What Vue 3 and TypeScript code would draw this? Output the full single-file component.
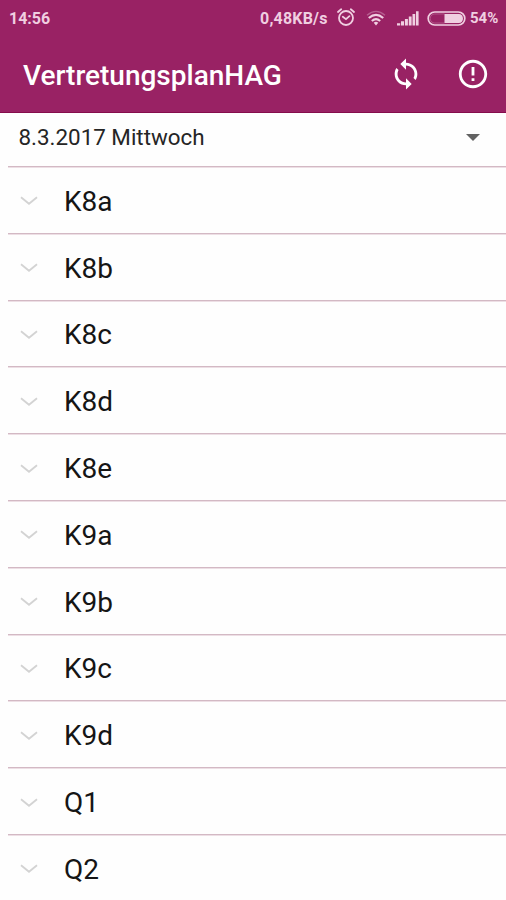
<script setup lang="ts">
const classes: string[] = ['K8a', 'K8b', 'K8c', 'K8d', 'K8e', 'K9a', 'K9b', 'K9c', 'K9d', 'Q1', 'Q2']
</script>

<template>
  <div class="screen">
    <header class="top">
      <div class="status">
        <span class="time">14:56</span>
        <span class="speed">0,48KB/s</span>
        <svg class="alarm" viewBox="0 0 18 18" width="18" height="18">
          <g fill="none" stroke="currentColor" stroke-width="1.8" stroke-linecap="round">
            <circle cx="9" cy="10" r="7" />
            <path d="M1 4 4.2 1.3M17 4 13.8 1.3M5.8 8.7 9 11.2 12.4 8.2" />
          </g>
        </svg>
        <svg class="wifi" viewBox="0 0 20 16" width="20" height="16">
          <g fill="none" stroke="currentColor">
            <path d="M1 5.2Q10-2.4 19 5.2" stroke-width="1.3" opacity=".35" />
            <path d="M2.8 8Q10 1.8 17.2 8" stroke-width="2.3" />
            <path d="M5.8 11Q10 7.2 14.2 11" stroke-width="2.1" />
          </g>
          <path d="M7.7 12.8Q10 10.8 12.3 12.8L10 15.4Z" fill="currentColor" />
        </svg>
        <svg class="signal" viewBox="0 0 22 15" width="22" height="15">
          <path d="M0 12.3h3.2v2.2H0zM4 10.3h3v4.2H4zM7.9 8h3v6.5h-3zM11.8 5.6h2.8v8.9h-2.8zM15.5 3h2.7v11.5h-2.7zM19 .2h2.6v14.3H19z" fill="currentColor" />
        </svg>
        <svg class="battery" viewBox="0 0 39 15" width="39" height="15">
          <rect x="1.2" y="1" width="36.6" height="13" rx="6.5" fill="none" stroke="currentColor" stroke-width="1.7" />
          <path d="M17.5 3h14.5a4 4.5 0 0 1 0 9H17.5z" fill="currentColor" />
          <path d="M17.5 3H7.7a4.5 4.5 0 0 0 0 9h9.8" fill="none" stroke="currentColor" stroke-width=".7" opacity=".4" />
        </svg>
        <span class="percent">54%</span>
      </div>
      <div class="toolbar">
        <h1>VertretungsplanHAG</h1>
        <svg class="sync" viewBox="0 0 24 24" width="34" height="34">
          <path fill="currentColor" d="M12 4V1L8 5l4 4V6c3.31 0 6 2.69 6 6 0 1.01-.25 1.97-.7 2.8l1.46 1.46C19.54 15.03 20 13.57 20 12c0-4.42-3.58-8-8-8zm0 14c-3.31 0-6-2.69-6-6 0-1.01.25-1.97.7-2.8L5.24 7.74C4.46 8.97 4 10.43 4 12c0 4.42 3.58 8 8 8v3l4-4-4-4v3z" />
        </svg>
        <svg class="info" viewBox="0 0 24 24" width="34" height="34">
          <path fill="currentColor" d="M11 15h2v2h-2zm0-8h2v6h-2zm.99-5C6.47 2 2 6.48 2 12s4.47 10 9.99 10C17.52 22 22 17.52 22 12S17.52 2 11.99 2zM12 20c-4.42 0-8-3.58-8-8s3.58-8 8-8 8 3.58 8 8-3.58 8-8 8z" />
        </svg>
      </div>
    </header>
    <div class="spinner">
      <span>8.3.2017 Mittwoch</span>
      <svg viewBox="0 0 14 7" width="14" height="7"><path d="M0 0h14L7 7z" fill="#626262" /></svg>
    </div>
    <ul class="list">
      <li v-for="name in classes" :key="name">
        <svg viewBox="0 0 18 10" width="18" height="10">
          <path d="M1 1.2 9 7.8 17 1.2" fill="none" stroke="#d3d3d3" stroke-width="1.8" />
        </svg>
        <span>{{ name }}</span>
      </li>
    </ul>
  </div>
</template>

<style>
body {
  margin: 0;
  background: #fefefe;
}
</style>

<style scoped>
.screen {
  width: 506px;
  height: 900px;
  overflow: hidden;
  background: #fefefe;
  font-family: Roboto, "Liberation Sans", sans-serif;
}
.top {
  height: 113px;
  box-sizing: border-box;
  background: #992264;
  border-bottom: 1px solid #850c4c;
}
.status {
  height: 36px;
  display: flex;
  align-items: center;
  color: #f0cfe1;
  font-size: 16px;
  font-weight: 700;
}
.status svg {
  flex: none;
}
.time {
  width: 251px;
  padding-left: 9px;
  box-sizing: border-box;
}
.speed {
  margin-left: 9px;
  width: 77px;
  white-space: nowrap;
  letter-spacing: 0.2px;
}
.alarm {
  margin-top: -2px;
}
.wifi {
  margin-left: 11px;
}
.signal {
  margin-left: 11px;
}
.battery {
  margin-left: 8px;
}
.percent {
  margin-left: 4px;
  font-size: 15px;
}
.toolbar {
  height: 76px;
  display: flex;
  align-items: center;
  color: #fff;
}
h1 {
  margin: 3px 0 0 23px;
  width: 366px;
  font-size: 28px;
  font-weight: 500;
}
.info {
  margin-left: 33px;
}
.spinner {
  height: 53px;
  padding: 0 26px 5px 18.5px;
  display: flex;
  justify-content: space-between;
  box-sizing: border-box;
  align-items: center;
  color: #252525;
  font-size: 22.4px;
}
.list {
  list-style: none;
  margin: 0 0 0 8px;
  padding: 0;
}
li {
  height: 66.8px;
  box-sizing: border-box;
  border-top: 1px solid #d3b9c4;
  box-shadow: inset 0 1px #eddfe5;
  padding: 3px 0 0 12px;
  display: flex;
  align-items: center;
  color: #151515;
  font-size: 28px;
}
li span {
  margin-left: 26px;
}
</style>
